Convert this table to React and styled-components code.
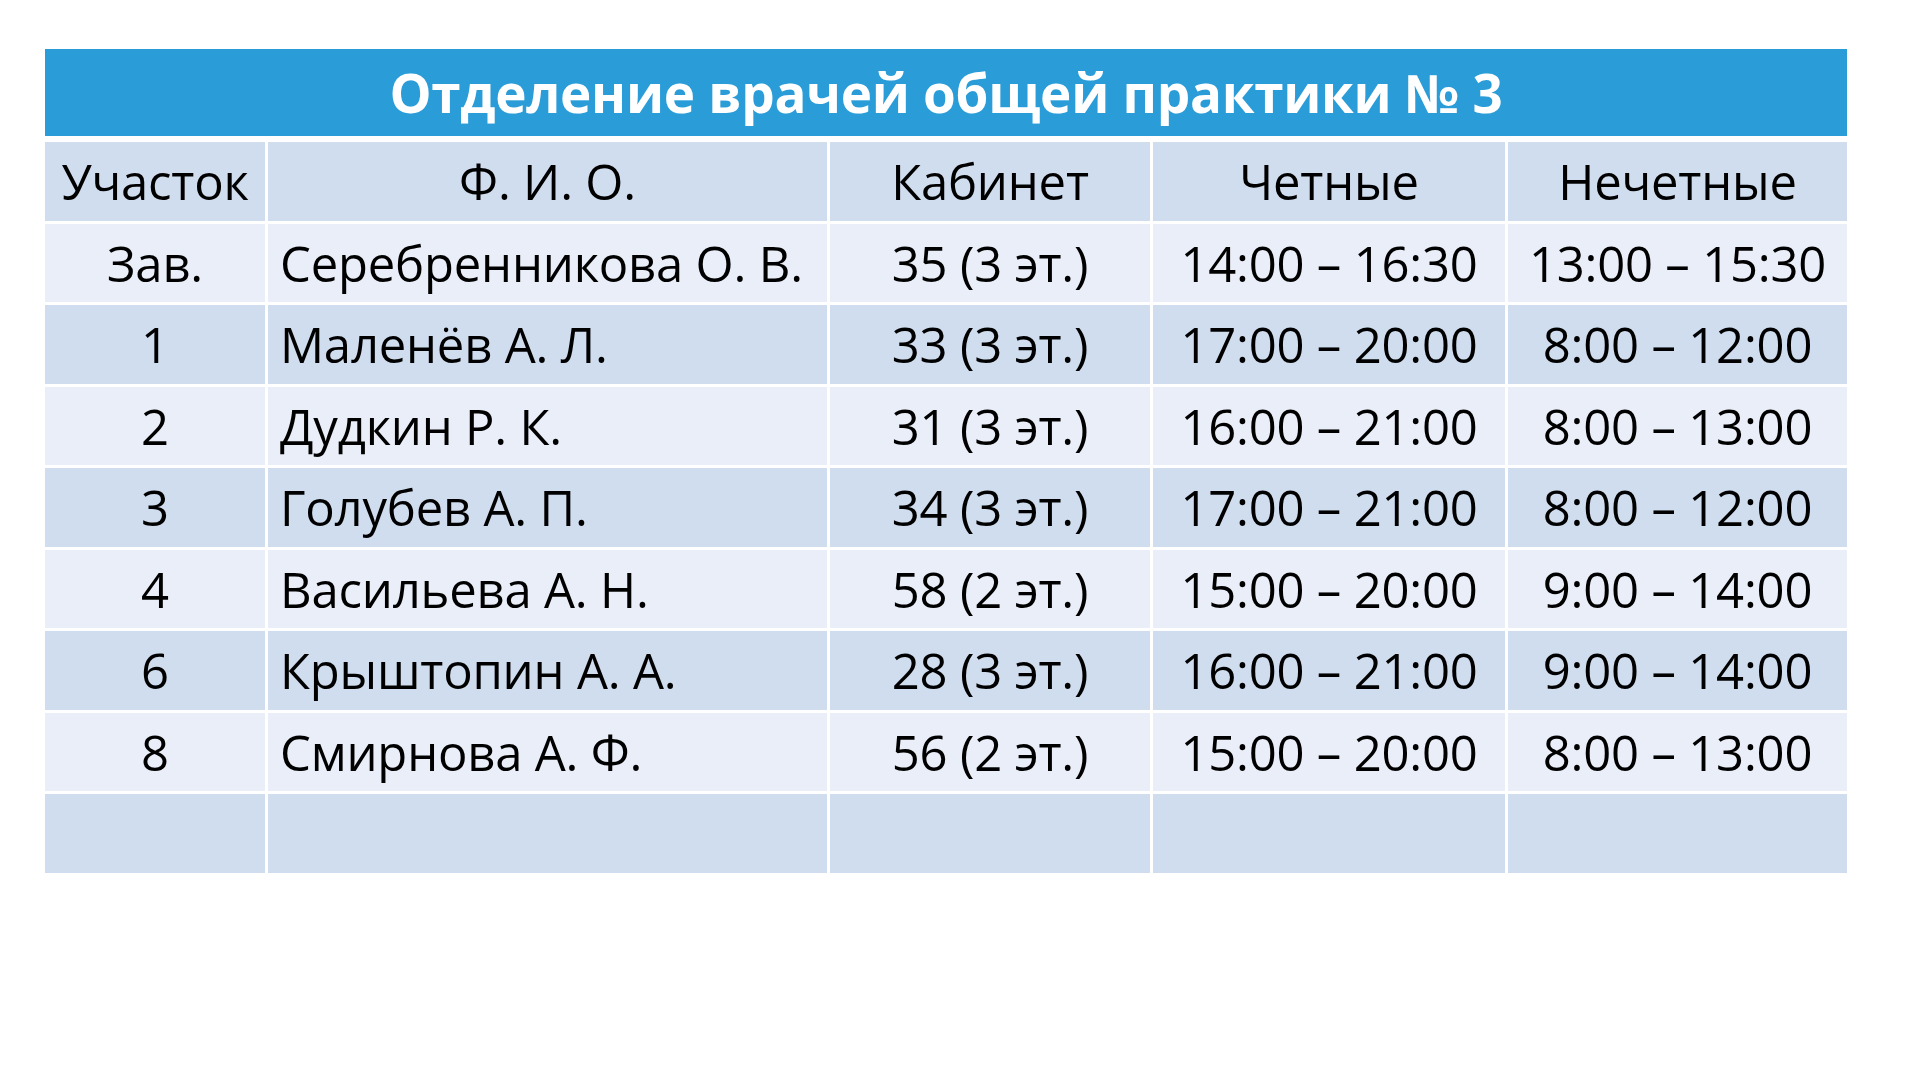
import React from 'react';
import styled, { createGlobalStyle } from 'styled-components';

const GlobalStyle = createGlobalStyle`
    html, body {
        margin: 0;
        padding: 0;
        background: #ffffff;
    }
    body {
        font-family: "Open Sans", "Noto Sans", "Liberation Sans", sans-serif;
        color: #000000;
    }
`;

const StyledDivPage = styled.div`
    width: 1920px;
    height: 1080px;
    padding: 49px 0 0 45px;
    box-sizing: border-box;
    background: #ffffff;
`;

const StyledDivTable = styled.div`
    width: 1802px;
    display: flex;
    flex-direction: column;
    gap: 6px;
`;

const StyledDivTitle = styled.div`
    height: 87px;
    background: #2a9cd8;
    color: #ffffff;
    font-weight: 700;
    font-size: 53px;
    display: flex;
    align-items: center;
    justify-content: center;
    letter-spacing: -0.3px;
`;

const StyledDivGrid = styled.div`
    display: grid;
    grid-template-columns: 220px 559px 320px 352px 339px;
    grid-auto-rows: 78.5px;
    gap: 3px;
`;

const StyledDivCell = styled.div`
    display: flex;
    align-items: center;
    justify-content: ${(p) => (p.$left ? 'flex-start' : 'center')};
    padding: ${(p) => (p.$left ? '0 0 0 12px' : '0')};
    background: ${(p) => (p.$dark ? '#cfddee' : '#e9eef8')};
    font-size: 49px;
    white-space: nowrap;
    letter-spacing: -0.2px;
`;

const columns = ['Участок', 'Ф. И. О.', 'Кабинет', 'Четные', 'Нечетные'];

const rows = [
    ['Зав.', 'Серебренникова О. В.', '35 (3 эт.)', '14:00 – 16:30', '13:00 – 15:30'],
    ['1', 'Маленёв А. Л.', '33 (3 эт.)', '17:00 – 20:00', '8:00 – 12:00'],
    ['2', 'Дудкин Р. К.', '31 (3 эт.)', '16:00 – 21:00', '8:00 – 13:00'],
    ['3', 'Голубев А. П.', '34 (3 эт.)', '17:00 – 21:00', '8:00 – 12:00'],
    ['4', 'Васильева А. Н.', '58 (2 эт.)', '15:00 – 20:00', '9:00 – 14:00'],
    ['6', 'Крыштопин А. А.', '28 (3 эт.)', '16:00 – 21:00', '9:00 – 14:00'],
    ['8', 'Смирнова А. Ф.', '56 (2 эт.)', '15:00 – 20:00', '8:00 – 13:00'],
    ['', '', '', '', ''],
];

const App = () => {
    return (
        <StyledDivPage>
            <GlobalStyle />
            <StyledDivTable>
                <StyledDivTitle>Отделение врачей общей практики № 3</StyledDivTitle>
                <StyledDivGrid>
                    {columns.map((c) => (
                        <StyledDivCell key={c} $dark>{c}</StyledDivCell>
                    ))}
                    {rows.map((row, i) =>
                        row.map((value, j) => (
                            <StyledDivCell key={`${i}-${j}`} $dark={i % 2 === 1} $left={j === 1}>
                                {value}
                            </StyledDivCell>
                        ))
                    )}
                </StyledDivGrid>
            </StyledDivTable>
        </StyledDivPage>
    );
};

export default App;
